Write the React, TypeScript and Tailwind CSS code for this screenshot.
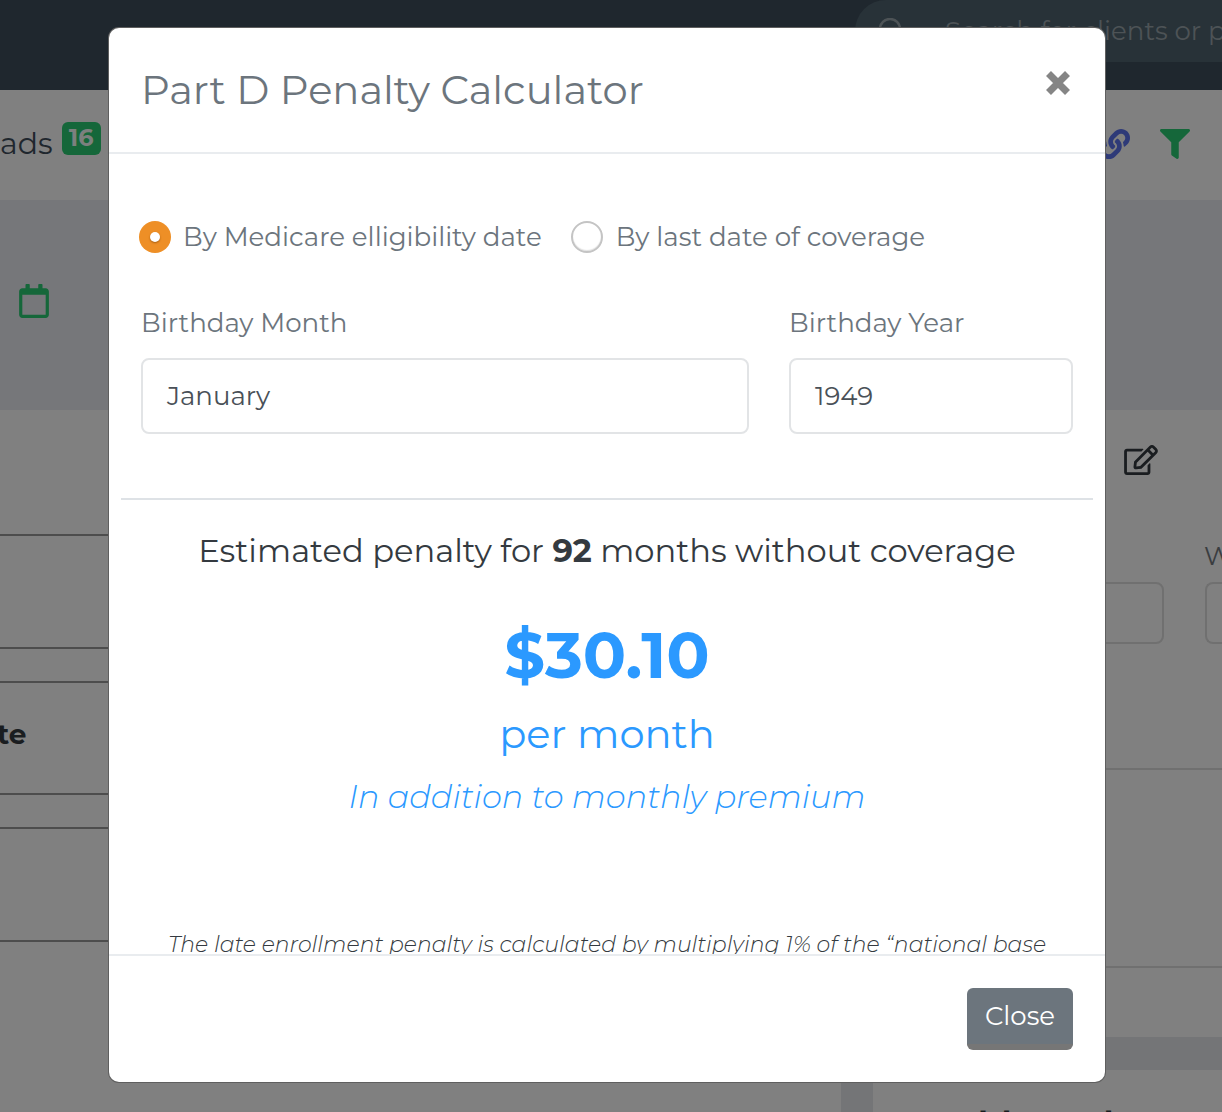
import React from "react";
import { FaRegCalendar, FaLink, FaFilter, FaRegEdit } from "react-icons/fa";

const font = "font-['Montserrat','Inter','Liberation_Sans',sans-serif]";

function Background() {
  return (
    <div className="flex h-[1112px] w-[1222px] flex-col overflow-hidden bg-[#808080]">
      <div className="flex h-[90px] shrink-0 overflow-hidden bg-[#1f272e]">
        <div className="ml-[855px] flex h-[62px] w-[500px] shrink-0 items-center rounded-l-[40px] bg-[#283238] pl-[24px]">
          <svg width="26" height="26" viewBox="0 0 26 26" fill="none" stroke="#4d5356" strokeWidth="2.5" className="shrink-0"><circle cx="11" cy="11" r="10" /><path d="M18 18l7 7" /></svg>
          <span className="ml-[40px] whitespace-nowrap text-[26px] text-[#4d5356]">Search for clients or people</span>
        </div>
      </div>
      <div className="flex h-[110px] shrink-0 items-center justify-between pr-[32px]">
        <div className="flex -translate-y-[2px] items-center gap-[9px]">
          <span className="text-[30px] text-[#1f272e]">ads</span>
          <span className="flex h-[33px] w-[39px] -translate-y-[5px] items-center justify-center rounded-[6px] bg-[#15673a] text-[24px] font-bold text-[#7c807e]">16</span>
        </div>
        <div className="flex -translate-y-[1px] items-center gap-[30px]">
          <FaLink className="h-[30px] w-[30px] text-[#2e3a78]" />
          <FaFilter className="h-[30px] w-[30px] text-[#15673a]" />
        </div>
      </div>
      <div className="flex h-[210px] shrink-0 items-center bg-[#76777a] pl-[19px]">
        <FaRegCalendar className="-translate-y-[4px] h-[34px] w-[30px] text-[#15673a]" />
      </div>
      <div className="flex min-h-0 flex-1 justify-between">
        <div className="w-[109px] shrink-0 overflow-hidden">
          <div className="h-[126px] border-b-2 border-[#4d4d4d]" />
          <div className="h-[113px] border-b-2 border-[#4d4d4d]" />
          <div className="h-[34px] border-b-2 border-[#4d4d4d]" />
          <div className="flex h-[112px] items-center border-b-2 border-[#4d4d4d] pb-[8px] text-[28px] font-bold leading-none text-[#1a1d20]"><span className="-ml-[3px]">te</span></div>
          <div className="h-[34px] border-b-2 border-[#4d4d4d]" />
          <div className="h-[113px] border-b-2 border-[#4d4d4d]" />
        </div>
        <div className="flex w-[381px] shrink-0 flex-col">
          <div className="flex h-[627px] shrink-0 flex-col">
            <div className="flex h-[100px] pl-[283px] pt-[35px]">
              <FaRegEdit className="h-[30px] w-[34px] text-[#1a1d20]" />
            </div>
            <div className="flex h-[72px] items-end overflow-hidden pb-[13px] pl-[363px] text-[26px] leading-none text-[#3a3d40]">W</div>
            <div className="flex h-[62px] gap-[41px]">
              <div className="h-full w-[323px] rounded-[8px] border-2 border-[#707070]" />
              <div className="h-full flex-1 rounded-l-[8px] border-y-2 border-l-2 border-[#707070]" />
            </div>
            <div className="h-[126px] border-b-2 border-[#707070]" />
            <div className="h-[198px] border-b-2 border-[#707070]" />
          </div>
          <div className="h-[33px] shrink-0 bg-[#747577]" />
          <div className="flex min-h-0 flex-1">
            <div className="w-[32px] shrink-0 bg-[#747577]" />
            <div className="flex flex-1 justify-between overflow-hidden whitespace-nowrap pl-[40px] pt-[38px] text-[32px] font-bold leading-none text-[#1a1d20]">
              <span>Health Tracker</span>
              <span className="w-[21px] overflow-hidden">T</span>
            </div>
          </div>
        </div>
      </div>
    </div>
  );
}

function Radio({ checked, label }: { checked?: boolean; label: string }) {
  return (
    <label className="flex items-center gap-[12px]">
      {checked ? (
        <span className="flex h-[32px] w-[32px] items-center justify-center rounded-full bg-[#ee8f26]">
          <span className="h-[10px] w-[10px] rounded-full bg-white shadow-[0_1px_2px_rgba(120,60,0,0.6)]" />
        </span>
      ) : (
        <span className="mr-px h-[32px] w-[32px] rounded-full border-2 border-[#c4c4c4] bg-white shadow-[inset_0_-1px_1px_rgba(0,0,0,0.12)]" />
      )}
      <span className="translate-y-[1px] whitespace-nowrap text-[26.1px] text-[#6c757d]">{label}</span>
    </label>
  );
}

function Field({ label, value }: { label: string; value: string }) {
  return (
    <div className="flex flex-col">
      <span className="h-[36px] whitespace-nowrap text-[26.1px] leading-[36px] text-[#6c757d]">{label}</span>
      <div className="mt-[17px] flex h-[76px] items-center rounded-[8px] border-2 border-[#e2e4e6] pl-[24px] text-[26px] text-[#495057]">{value}</div>
    </div>
  );
}

function Modal() {
  return (
    <div className="absolute left-[109px] top-[28px] flex h-[1054px] w-[996px] flex-col overflow-hidden rounded-[10px] bg-white shadow-[0_0_0_1px_#5f5f5f]">
      <div className="flex h-[126px] shrink-0 items-start justify-between border-b-2 border-[#e9ecef] pl-[32px] pr-[35px]">
        <h1 className="mt-[38px] text-[40.1px] leading-[48px] text-[#6c757d]">Part D Penalty Calculator</h1>
        <svg width="24" height="24" viewBox="0 0 24 24" fill="none" stroke="#858585" strokeWidth="7" className="mt-[43px]" aria-hidden="true">
          <path d="M2.5 2.5L21.5 21.5M21.5 2.5L2.5 21.5" />
        </svg>
      </div>
      <div className="min-h-0 flex-1 overflow-hidden px-[32px]">
        <div className="-ml-[2px] mt-[67px] flex h-[32px] items-center gap-[29px]">
          <Radio checked label="By Medicare elligibility date" />
          <Radio label="By last date of coverage" />
        </div>
        <div className="mt-[52px] grid grid-cols-[608px_284px] gap-x-[40px]">
          <Field label="Birthday Month" value="January" />
          <Field label="Birthday Year" value="1949" />
        </div>
        <div className="-mx-[20px] mt-[64px] h-[2px] bg-[#dee2e6]" />
        <div className="mt-[27px] flex flex-col items-center text-center">
          <p className="whitespace-nowrap text-[32.16px] leading-[48px] text-[#343a40]">
            Estimated penalty for <b className="font-bold">92</b> months without coverage
          </p>
          <p className="mt-[40px] text-[64px] font-bold leading-[80px] text-[#2b99ff]">$30.10</p>
          <p className="mt-[11px] text-[40px] leading-[56px] text-[#2b99ff]">per month</p>
          <p className="mt-[12px] text-[32px] font-light italic leading-[46px] text-[#2b99ff]">In addition to monthly premium</p>
          <p className="mt-[107px] w-[900px] text-[22px] font-light italic leading-[36px] text-[#343a40]">
            The late enrollment penalty is calculated by multiplying 1% of the “national base beneficiary premium” times the number of full, uncovered months.
          </p>
        </div>
      </div>
      <div className="flex h-[128px] shrink-0 items-start justify-end border-t-2 border-[#e9ecef] pr-[32px] pt-[32px]">
        <button className="h-[62px] w-[106px] rounded-[6px] border-b-[6px] border-[#767676] bg-[#6c757d] text-[26px] leading-none text-white">Close</button>
      </div>
    </div>
  );
}

export default function App() {
  return (
    <div className={`relative h-[1112px] w-[1222px] overflow-hidden ${font}`}>
      <Background />
      <Modal />
    </div>
  );
}
